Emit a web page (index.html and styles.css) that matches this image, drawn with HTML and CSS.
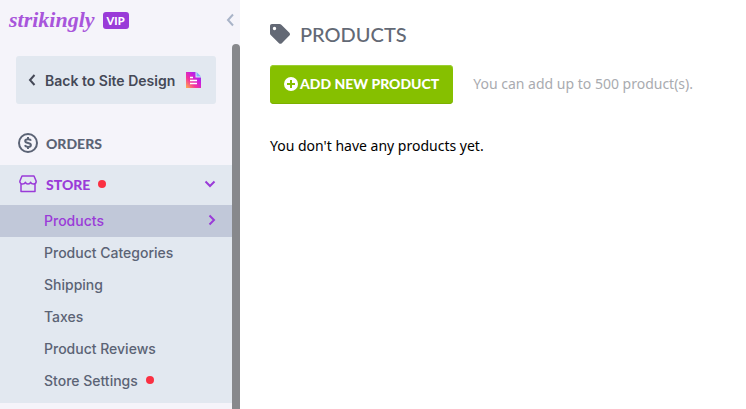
FILE: index.html
```html
<!DOCTYPE html>
<html lang="en">
<head>
    <meta charset="utf-8">
    <title>Products</title>
    <link rel="stylesheet" href="styles.css">
</head>
<body>
    <div class="page">
        <aside class="sidebar">
            <header class="topbar">
                <a class="logo" href="#">strikingly</a>
                <span class="vip">VIP</span>
                <button class="collapse" type="button" aria-label="Collapse menu">
                    <svg width="8" height="14" viewBox="0 0 8 14"><path d="M7 1.500L2 7l5 5.500"/></svg>
                </button>
            </header>
            <div class="scroll-area">
                <nav class="menu">
                    <a class="back" href="#">
                        <svg class="arrow" width="8" height="12" viewBox="0 0 8 12"><path d="M6.500 1L2 6l4.500 5"/></svg>
                        Back to Site Design
                        <svg class="site-icon" width="15" height="16" viewBox="0 0 15 16">
                            <defs>
                                <linearGradient id="siteFill" x1="0" y1="1" x2="1" y2="0">
                                    <stop offset="0" stop-color="#ffb347"/>
                                    <stop offset="0.35" stop-color="#f5359a"/>
                                    <stop offset="0.65" stop-color="#c81ee0"/>
                                    <stop offset="1" stop-color="#5a4cf0"/>
                                </linearGradient>
                            </defs>
                            <path d="M0 0h9.500v5.500H15V16H0z" fill="url(#siteFill)"/>
                            <path d="M10.500 0L15 4.500h-4.500z" fill="#7db4f5"/>
                            <path d="M4 5.500h3M4 8.500h7M4 11.500h7" stroke="#fff" stroke-width="1.500"/>
                        </svg>
                    </a>
                    <a class="section" href="#">
                        <svg class="section-icon" width="20" height="20" viewBox="0 0 20 20">
                            <circle cx="10" cy="10" r="9"/>
                            <path d="M13 7.700C12.600 6.700 11.500 6.200 10 6.200 8.300 6.200 7.200 6.900 7.200 8s1.100 1.700 2.800 2 2.900.8 2.900 2-1.200 1.900-2.900 1.900c-1.600 0-2.700-.6-3.200-1.600M10 4v2.200M10 13.900V16"/>
                        </svg>
                        ORDERS
                    </a>
                    <div class="store">
                        <a class="section active" href="#">
                            <svg class="section-icon store-icon" width="20" height="20" viewBox="0 0 20 20">
                                <path d="M4 2h12l2.200 5.200c0 1.600-1.100 2.800-2.700 2.800S13 9.200 12.600 8.200C12.200 9.200 11.300 10 10 10S7.800 9.200 7.400 8.200C7 9.200 6 10 4.500 10S1.800 8.800 1.800 7.200zM3 10v7.500h14V10"/>
                            </svg>
                            STORE
                            <span class="dot"></span>
                            <svg class="caret" width="12" height="8" viewBox="0 0 12 8"><path d="M1.500 1.500L6 6l4.500-4.500"/></svg>
                        </a>
                        <a class="item current" href="#">
                            Products
                            <svg class="caret" width="8" height="12" viewBox="0 0 8 12"><path d="M1.500 1.500L6 6l-4.500 4.500"/></svg>
                        </a>
                        <a class="item" href="#">Product Categories</a>
                        <a class="item" href="#">Shipping</a>
                        <a class="item" href="#">Taxes</a>
                        <a class="item" href="#">Product Reviews</a>
                        <a class="item" href="#">Store Settings <span class="dot"></span></a>
                    </div>
                </nav>
                <div class="scrollbar"></div>
            </div>
        </aside>
        <main class="content">
            <h1>
                <svg width="20" height="20" viewBox="0 0 20 20"><path fill-rule="evenodd" d="M0 2C0 .8.8 0 2 0h7.500c.7 0 1.300.2 1.800.7l8.100 8.100c.8.8.8 1.900 0 2.700l-7.600 7.700c-.8.800-2 .8-2.800 0L.7 10.900C.2 10.400 0 9.800 0 9.200zM4.500 2.800a1.700 1.700 0 1 0 0 3.400 1.700 1.700 0 0 0 0-3.400z"/></svg>
                PRODUCTS
            </h1>
            <div class="actions">
                <button class="add" type="button">
                    <svg width="14" height="14" viewBox="0 0 14 14">
                        <circle cx="7" cy="7" r="7"/>
                        <path d="M7 3v8M3 7h8"/>
                    </svg>
                    ADD NEW PRODUCT
                </button>
                <span class="hint">You can add up to 500 product(s).</span>
            </div>
            <p class="empty">You don't have any products yet.</p>
        </main>
    </div>
</body>
</html>
```

FILE: styles.css
```css
* {
    box-sizing: border-box;
}

body {
    margin: 0;
    background: #fff;
    font-family: "Noto Sans", sans-serif;
    font-size: 14px;
    color: #000;
}

a {
    color: inherit;
    text-decoration: none;
}

button {
    border: none;
    cursor: pointer;
}

svg {
    flex: none;
}

.page {
    display: flex;
    min-height: 100vh;
}

/* sidebar */
.sidebar {
    display: flex;
    flex-direction: column;
    flex: none;
    width: 240px;
    background: #f5f4fa;
    color: #5b6375;
}

.topbar {
    display: flex;
    align-items: center;
    height: 44px;
    padding: 0 6px 4px 9px;
}

.logo {
    font-family: "Liberation Serif", serif;
    font-size: 22px;
    font-weight: bold;
    font-style: italic;
    line-height: 24px;
    color: #a855db;
}

.vip {
    margin-left: 8px;
    padding: 0 4px;
    border-radius: 3px;
    background: #9a3bd8;
    color: #fff;
    font-family: Lato, sans-serif;
    font-size: 11px;
    font-weight: 900;
    line-height: 17px;
}

.collapse {
    display: flex;
    margin-left: auto;
    padding: 0;
    background: none;
}

.collapse path {
    fill: none;
    stroke: #a9b4c8;
    stroke-width: 2;
}

.scroll-area {
    display: flex;
    flex: 1;
}

.menu {
    flex: 1;
    padding: 12px 0 6px;
}

.scrollbar {
    width: 8px;
    border-radius: 4px 4px 0 0;
    background: #87888c;
}

.back {
    display: flex;
    align-items: center;
    height: 48px;
    margin: 0 16px 20px;
    padding: 0 12px;
    border-radius: 3px;
    background: #e2e8f0;
    color: #454957;
    font-family: Inter, sans-serif;
    font-weight: 600;
}

.arrow {
    margin-right: 9px;
    fill: none;
    stroke: #454957;
    stroke-width: 2;
}

.site-icon {
    margin-left: 11px;
}

.section {
    display: flex;
    align-items: center;
    height: 40px;
    padding: 0 16px 2px 18px;
    font-family: Lato, sans-serif;
    font-size: 14px;
    font-weight: 900;
}

.section-icon {
    margin-right: 8px;
    fill: none;
    stroke: currentColor;
    stroke-width: 2;
    stroke-linejoin: round;
}

.store-icon {
    stroke-width: 1.5;
}

.active,
.current {
    color: #9a3bd8;
}

.store {
    margin-top: 1px;
    padding-bottom: 6px;
    background: #e2e8f0;
}

.item {
    display: flex;
    align-items: center;
    height: 32px;
    padding: 0 16px 2px 44px;
    font-family: Inter, sans-serif;
    font-weight: 500;
}

.current {
    background: #c1c8d9;
}

.caret {
    margin-left: auto;
    fill: none;
    stroke: currentColor;
    stroke-width: 2;
}

.dot {
    width: 8px;
    height: 8px;
    margin-left: 8px;
    border-radius: 50%;
    background: #fa3042;
}

/* main column */
.content {
    flex: 1;
    padding: 20px 30px;
}

h1 {
    display: flex;
    align-items: center;
    gap: 10px;
    margin: 0 0 17px;
    color: #636975;
    font-family: Lato, sans-serif;
    font-size: 20px;
    font-weight: 500;
    line-height: 28px;
}

h1 svg {
    fill: #636975;
}

.actions {
    display: flex;
    align-items: center;
    gap: 20px;
}

.add {
    display: flex;
    align-items: center;
    gap: 2px;
    height: 39px;
    padding: 0 14px 2px;
    border-radius: 4px;
    background: #86c000;
    box-shadow: inset 0 1px 0 #9bcf33, inset 0 -1px 0 #7bb000;
    color: #fff;
    font-family: Lato, sans-serif;
    font-size: 14px;
    font-weight: 900;
}

.add circle {
    fill: #fff;
}

.add path {
    stroke: #86c000;
    stroke-width: 2;
}

.hint {
    padding-bottom: 2px;
    color: #a9abb0;
}

.empty {
    margin: 32px 0 0;
    line-height: 20px;
}
```
